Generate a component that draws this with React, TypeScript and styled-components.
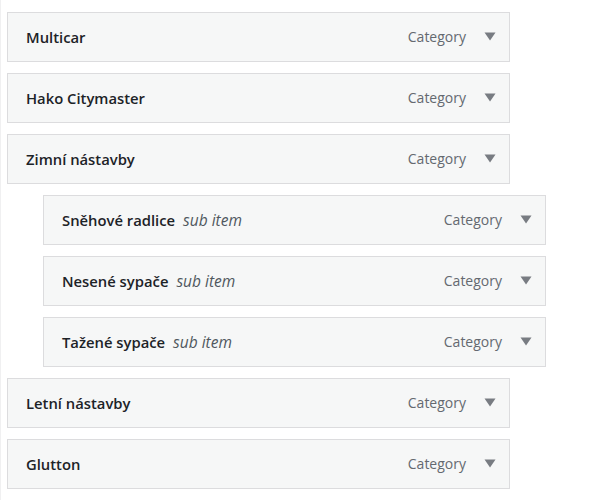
import React from 'react'
import styled, { createGlobalStyle } from 'styled-components'

const GlobalStyle = createGlobalStyle`
  html, body {
    margin: 0;
    padding: 0;
    background: #ffffff;
  }
  body {
    font-family: "Open Sans", "Noto Sans", sans-serif;
    color: #1d2327;
  }
`

const MenuList = styled.ul`
  list-style: none;
  margin: 0;
  padding: 12px 0 0 6px;
  display: flex;
  flex-direction: column;
  gap: 11px;
  border-left: 1px solid #f0f0f1;
  min-height: 500px;
  box-sizing: border-box;
`

const MenuItemBar = styled.li<{ $depth: number }>`
  box-sizing: border-box;
  width: 503px;
  height: 50px;
  margin-left: ${(p) => p.$depth * 36}px;
  display: flex;
  align-items: center;
  padding: 0 13px 1px 18px;
  background: #f6f7f7;
  border: 1px solid #dcdcde;
`

const ItemTitle = styled.span`
  flex: 1;
  display: flex;
  align-items: baseline;
  gap: 8px;
  font-size: 14.8px;
  font-weight: 600;
  color: #1d2327;
`

const SubLabel = styled.span`
  font-size: 15.5px;
  font-weight: 400;
  font-style: italic;
  color: #50575e;
`

const ItemType = styled.span`
  font-size: 14px;
  color: #646970;
  margin-right: 18px;
`

const ToggleArrow = styled.svg`
  width: 12px;
  height: 9px;
  display: block;
`

type Item = {
  title: string
  depth: number
}

const items: Item[] = [
  { title: 'Multicar', depth: 0 },
  { title: 'Hako Citymaster', depth: 0 },
  { title: 'Zimní nástavby', depth: 0 },
  { title: 'Sněhové radlice', depth: 1 },
  { title: 'Nesené sypače', depth: 1 },
  { title: 'Tažené sypače', depth: 1 },
  { title: 'Letní nástavby', depth: 0 },
  { title: 'Glutton', depth: 0 },
]

export default function App() {
  return (
    <React.Fragment>
      <GlobalStyle />
      <MenuList>
        {items.map((item) => (
          <MenuItemBar key={item.title} $depth={item.depth}>
            <ItemTitle>
              {item.title}
              {item.depth > 0 && <SubLabel>sub item</SubLabel>}
            </ItemTitle>
            <ItemType>Category</ItemType>
            <ToggleArrow viewBox="0 0 12 9">
              <polygon points="0.5,0.5 11.5,0.5 6,8.5" fill="#787c82" />
            </ToggleArrow>
          </MenuItemBar>
        ))}
      </MenuList>
    </React.Fragment>
  )
}
